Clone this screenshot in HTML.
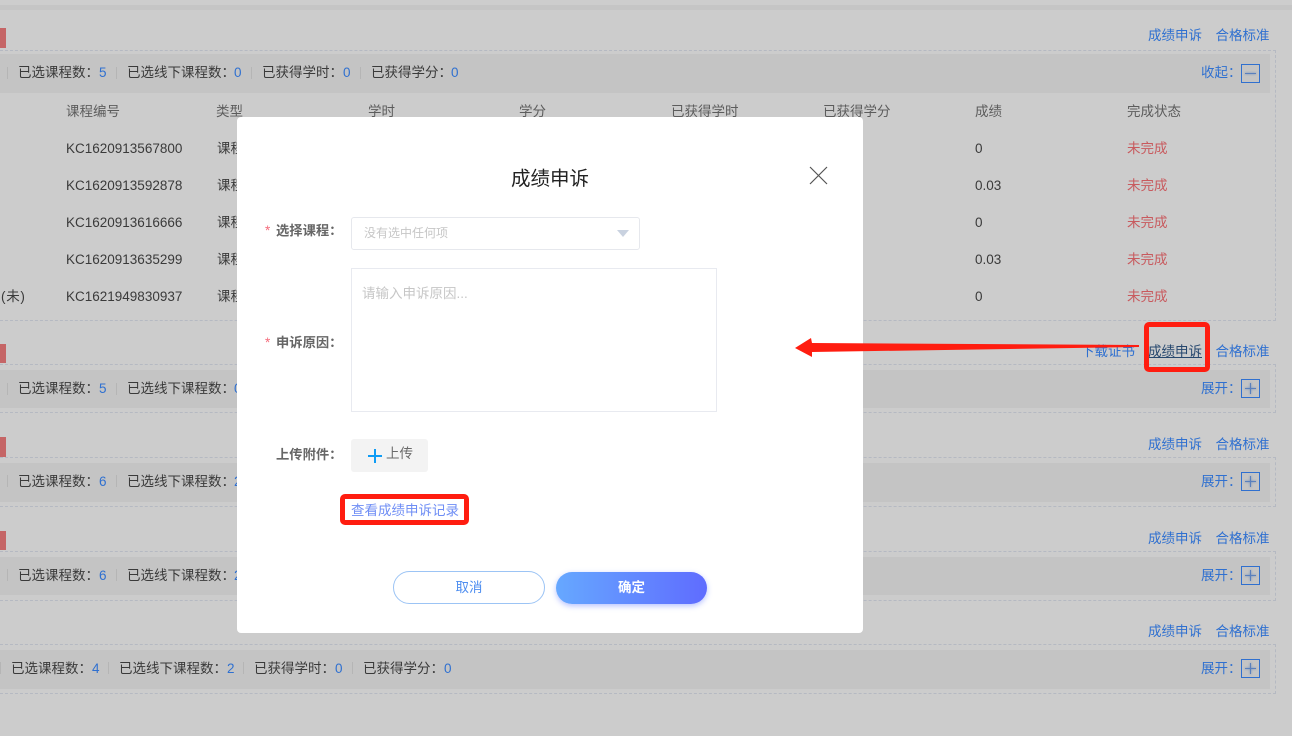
<!DOCTYPE html>
<html lang="zh"><head><meta charset="utf-8"><title>成绩申诉</title>
<style>
*{box-sizing:border-box}
html,body{margin:0;padding:0}
html{background:#cccccc}
body{width:1292px;height:736px;overflow:hidden;position:relative;background:#cccccc;font-family:"Liberation Sans","Noto Sans CJK SC",sans-serif;font-size:13.5px;color:#3a3a3a}
.t{position:absolute;line-height:20px;white-space:nowrap;margin-top:1px}
.b{color:#2f70d0}
.h{color:#5c5c5c}
.r{color:#c85a5e}
.red{position:absolute;left:0;width:6px;background:#c56566}
.box{position:absolute;left:-10px;width:1286px;border:1px dashed #b5b9c2}
.bar{position:absolute;left:0;width:1270px;background:#c4c4c4}
.sep{position:absolute;width:1px;height:12px;background:#b5b5b5}
.ic{position:absolute;left:1241px;width:19px;height:19px;border:1px solid #3070cf}
.ic i{position:absolute;background:#5a80bd}
.ic .x{left:3px;top:8px;width:11px;height:1px;box-shadow:0 0 2px #5a80bd}
.ic .y{left:8px;top:3px;width:1px;height:11px;box-shadow:0 0 2px #5a80bd}
#modal{position:absolute;left:237px;top:117px;width:626px;height:516px;background:#fff;border-radius:4px}
.l{position:absolute;font-weight:bold;color:#666;line-height:20px;white-space:nowrap;font-size:13.3px;margin-top:1px}
.s{color:#f56c7c;font-weight:normal;position:absolute;line-height:20px;margin-top:1px}
</style></head><body>
<div style="position:absolute;left:0;top:0;width:1292px;height:5px;background:#cdcdcd"></div>
<div style="position:absolute;left:0;top:5px;width:1292px;height:5px;background:#c5c5c5"></div>

<!-- section 1 -->
<div class="red" style="top:28px;height:20px"></div>
<div class="box" style="top:50px;height:271px"></div>
<div class="bar" style="top:54px;height:39px"></div>
<span class="t b" style="left:1148px;top:25px">成绩申诉</span><span class="t b" style="left:1215.5px;top:25px">合格标准</span>
<i class="sep" style="left:7px;top:67px"></i><span class="t" style="left:18px;top:62px">已选课程数：</span><span class="t b" style="left:99px;top:62px">5</span>
<i class="sep" style="left:116px;top:67px"></i><span class="t" style="left:127px;top:62px">已选线下课程数：</span><span class="t b" style="left:234px;top:62px">0</span>
<i class="sep" style="left:251px;top:67px"></i><span class="t" style="left:262px;top:62px">已获得学时：</span><span class="t b" style="left:343px;top:62px">0</span>
<i class="sep" style="left:360px;top:67px"></i><span class="t" style="left:371px;top:62px">已获得学分：</span><span class="t b" style="left:451px;top:62px">0</span>
<span class="t b" style="left:1201px;top:62px">收起：</span>
<div class="ic" style="top:64px"><i class="x"></i></div>

<span class="t h" style="left:66px;top:101px">课程编号</span>
<span class="t h" style="left:216px;top:101px">类型</span>
<span class="t h" style="left:368px;top:101px">学时</span>
<span class="t h" style="left:519px;top:101px">学分</span>
<span class="t h" style="left:671px;top:101px">已获得学时</span>
<span class="t h" style="left:823px;top:101px">已获得学分</span>
<span class="t h" style="left:975px;top:101px">成绩</span>
<span class="t h" style="left:1127px;top:101px">完成状态</span>

<span class="t" style="left:66px;top:138px">KC1620913567800</span><span class="t" style="left:217px;top:138px">课程</span><span class="t" style="left:975px;top:138px">0</span><span class="t r" style="left:1127px;top:138px">未完成</span>
<span class="t" style="left:66px;top:175px">KC1620913592878</span><span class="t" style="left:217px;top:175px">课程</span><span class="t" style="left:975px;top:175px">0.03</span><span class="t r" style="left:1127px;top:175px">未完成</span>
<span class="t" style="left:66px;top:212px">KC1620913616666</span><span class="t" style="left:217px;top:212px">课程</span><span class="t" style="left:975px;top:212px">0</span><span class="t r" style="left:1127px;top:212px">未完成</span>
<span class="t" style="left:66px;top:249px">KC1620913635299</span><span class="t" style="left:217px;top:249px">课程</span><span class="t" style="left:975px;top:249px">0.03</span><span class="t r" style="left:1127px;top:249px">未完成</span>
<span class="t" style="left:1px;top:286px;letter-spacing:.7px">(未)</span><span class="t" style="left:66px;top:286px">KC1621949830937</span><span class="t" style="left:217px;top:286px">课程</span><span class="t" style="left:975px;top:286px">0</span><span class="t r" style="left:1127px;top:286px">未完成</span>

<!-- section 2 -->
<div class="red" style="top:344px;height:19px"></div>
<div class="box" style="top:364px;height:49px"></div>
<div class="bar" style="top:370px;height:38px"></div>
<span class="t b" style="left:1081px;top:341px">下载证书</span>
<span class="t" style="left:1148px;top:341px;color:#26476e;text-decoration:underline">成绩申诉</span><span class="t b" style="left:1215.5px;top:341px">合格标准</span>
<i class="sep" style="left:7px;top:383px"></i><span class="t" style="left:18px;top:378px">已选课程数：</span><span class="t b" style="left:99px;top:378px">5</span>
<i class="sep" style="left:116px;top:383px"></i><span class="t" style="left:127px;top:378px">已选线下课程数：</span><span class="t b" style="left:234px;top:378px">0</span>
<span class="t b" style="left:1201px;top:378px">展开：</span>
<div class="ic" style="top:379px"><i class="x"></i><i class="y"></i></div>

<!-- section 3 -->
<div class="red" style="top:437px;height:20px"></div>
<div class="box" style="top:457px;height:50px"></div>
<div class="bar" style="top:463px;height:39px"></div>
<span class="t b" style="left:1148px;top:434px">成绩申诉</span><span class="t b" style="left:1215.5px;top:434px">合格标准</span>
<i class="sep" style="left:7px;top:475px"></i><span class="t" style="left:18px;top:471px">已选课程数：</span><span class="t b" style="left:99px;top:471px">6</span>
<i class="sep" style="left:116px;top:475px"></i><span class="t" style="left:127px;top:471px">已选线下课程数：</span><span class="t b" style="left:234px;top:471px">2</span>
<span class="t b" style="left:1201px;top:471px">展开：</span>
<div class="ic" style="top:472px"><i class="x"></i><i class="y"></i></div>

<!-- section 4 -->
<div class="red" style="top:531px;height:19px"></div>
<div class="box" style="top:551px;height:50px"></div>
<div class="bar" style="top:557px;height:38px"></div>
<span class="t b" style="left:1148px;top:528px">成绩申诉</span><span class="t b" style="left:1215.5px;top:528px">合格标准</span>
<i class="sep" style="left:7px;top:569px"></i><span class="t" style="left:18px;top:565px">已选课程数：</span><span class="t b" style="left:99px;top:565px">6</span>
<i class="sep" style="left:116px;top:569px"></i><span class="t" style="left:127px;top:565px">已选线下课程数：</span><span class="t b" style="left:234px;top:565px">2</span>
<span class="t b" style="left:1201px;top:565px">展开：</span>
<div class="ic" style="top:566px"><i class="x"></i><i class="y"></i></div>

<!-- section 5 -->
<div class="box" style="top:644px;height:50px"></div>
<div class="bar" style="top:650px;height:39px"></div>
<span class="t b" style="left:1148px;top:621px">成绩申诉</span><span class="t b" style="left:1215.5px;top:621px">合格标准</span>
<i class="sep" style="left:0;top:662px"></i><span class="t" style="left:11px;top:658px">已选课程数：</span><span class="t b" style="left:92px;top:658px">4</span>
<i class="sep" style="left:108px;top:662px"></i><span class="t" style="left:119px;top:658px">已选线下课程数：</span><span class="t b" style="left:227px;top:658px">2</span>
<i class="sep" style="left:243px;top:662px"></i><span class="t" style="left:254px;top:658px">已获得学时：</span><span class="t b" style="left:335px;top:658px">0</span>
<i class="sep" style="left:352px;top:662px"></i><span class="t" style="left:363px;top:658px">已获得学分：</span><span class="t b" style="left:444px;top:658px">0</span>
<span class="t b" style="left:1201px;top:658px">展开：</span>
<div class="ic" style="top:659px"><i class="x"></i><i class="y"></i></div>

<!-- modal -->
<div id="modal">
  <span class="t" style="left:274px;top:48px;font-size:19.5px;line-height:26px;color:#222">成绩申诉</span>
  <svg style="position:absolute;left:571px;top:48px" width="21" height="21" viewBox="0 0 21 21"><path d="M2 2L19 19M19 2L2 19" stroke="#555" stroke-width="1.2" fill="none"/></svg>

  <span class="s" style="left:28px;top:103px">*</span>
  <span class="l" style="left:39px;top:103px">选择课程：</span>
  <div style="position:absolute;left:114px;top:100px;width:289px;height:33px;border:1px solid #e6e8ed;border-radius:3px"></div>
  <span class="t" style="left:127px;top:105px;color:#c6c6c6;font-size:12px">没有选中任何项</span>
  <svg style="position:absolute;left:380px;top:113px" width="12" height="8" viewBox="0 0 12 8"><path d="M0 0H12L6 7Z" fill="#c9d2e0"/></svg>

  <div style="position:absolute;left:114px;top:151px;width:366px;height:144px;border:1px solid #e8eaf0"></div>
  <span class="t" style="left:125px;top:166px;color:#c6c6c6">请输入申诉原因...</span>
  <span class="s" style="left:28px;top:215px">*</span>
  <span class="l" style="left:39px;top:215px">申诉原因：</span>

  <span class="l" style="left:39px;top:327px">上传附件：</span>
  <div style="position:absolute;left:114px;top:322px;width:77px;height:33px;background:#f3f3f3;border-radius:3px"></div>
  <svg style="position:absolute;left:131px;top:332px" width="14" height="14" viewBox="0 0 14 14"><path d="M7 0V14M0 7H14" stroke="#0f9cf5" stroke-width="2" fill="none"/></svg>
  <span class="t" style="left:149px;top:326px;color:#6a6a6a">上传</span>

  <div style="position:absolute;left:103px;top:377px;width:129px;height:31px;border:5px solid #ff1d10;border-radius:5px"></div>
  <span class="t" style="left:114px;top:383px;color:#6f8ef5">查看成绩申诉记录</span>

  <div style="position:absolute;left:156px;top:454px;width:152px;height:33px;border:1px solid #9cc4f5;border-radius:17px;text-align:center;line-height:31px;color:#4d8df0">取消</div>
  <div style="position:absolute;left:319px;top:455px;width:151px;height:32px;border-radius:16px;background:linear-gradient(90deg,#66a8ff,#5f6cff);box-shadow:0 2px 6px rgba(95,120,255,.45);text-align:center;line-height:32px;color:#fff;font-weight:bold">确定</div>
</div>

<!-- annotations -->
<div style="position:absolute;left:1144px;top:322px;width:66px;height:50px;border:5px solid #ff1d10;border-radius:5px"></div>
<svg style="position:absolute;left:0;top:0" width="1292" height="736" viewBox="0 0 1292 736"><path d="M1139 345L1139 347L812 352L812 357L795 348L811 338L812 343Z" fill="#ff1d10"/></svg>
</body></html>
